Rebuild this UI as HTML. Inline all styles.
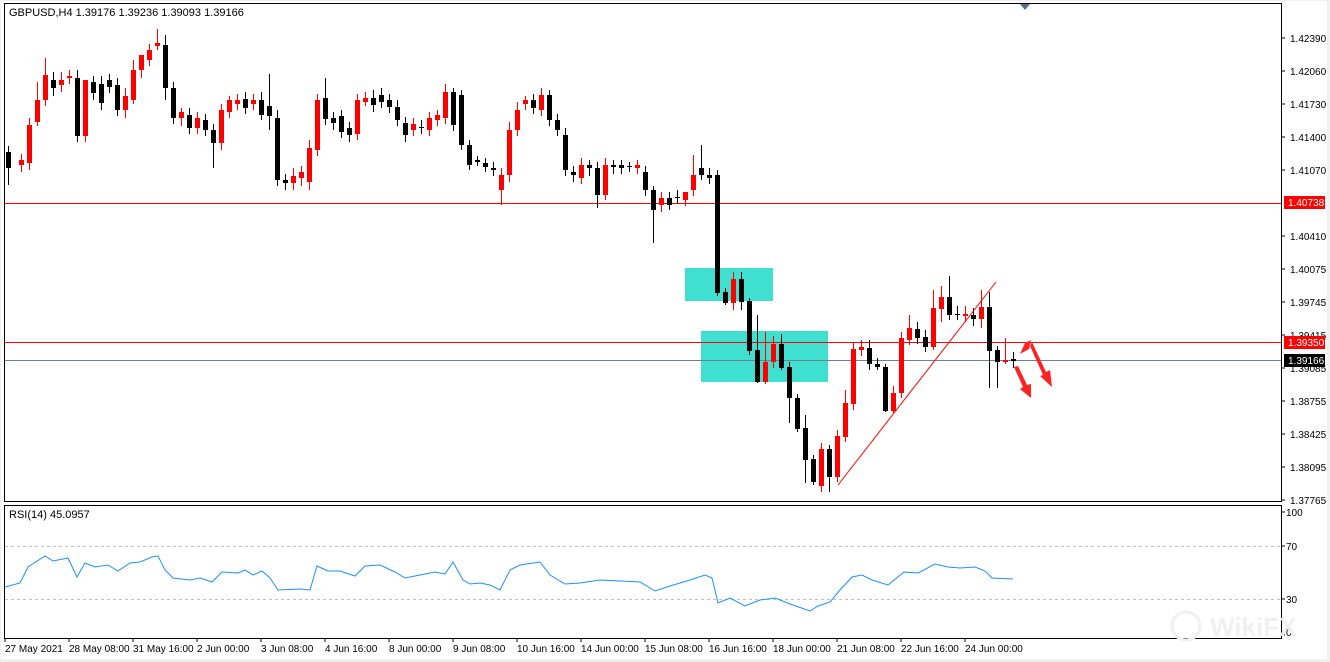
<!DOCTYPE html>
<html><head><meta charset="utf-8"><style>
html,body{margin:0;padding:0;background:#f0f0f0;}
svg{display:block;font-family:"Liberation Sans",sans-serif;}
.r rect{fill:#f00}.r path{stroke:#f00;fill:none}
.b rect{fill:#000}.b path{stroke:#000;fill:none}
</style></head><body>
<svg width="1330" height="662" viewBox="0 0 1330 662" xmlns="http://www.w3.org/2000/svg">
<rect x="0" y="0" width="1330" height="662" fill="#f0f0f0"/>
<rect x="1" y="1" width="1326" height="658" fill="#fff"/>
<rect x="4.5" y="3.5" width="1277" height="498" fill="#fff" stroke="#000"/>
<rect x="4.5" y="505.5" width="1277" height="133" fill="#fff" stroke="#000"/>
<polygon points="1020,4 1030,4 1025,10" fill="#607080"/>
<text x="9" y="16" font-size="11" fill="#000">GBPUSD,H4  1.39176 1.39236 1.39093 1.39166</text>
<text x="9" y="518" font-size="11" fill="#000">RSI(14) 45.0957</text>
<rect x="685" y="268" width="88" height="33" fill="#40e0d0"/>
<rect x="701" y="331" width="127" height="51" fill="#40e0d0"/>
<line x1="5" y1="203.5" x2="1281" y2="203.5" stroke="#f00"/>
<line x1="5" y1="342.5" x2="1281" y2="342.5" stroke="#f00"/>
<line x1="5" y1="360.5" x2="1281" y2="360.5" stroke="#708090"/>

<g class="b">
<path d="M8.5,146V185M53.5,72V96M77.5,70V142M93.5,76V100M101.5,76V110M109.5,74V93M117.5,78V116M165.5,35V100M173.5,82V124M189.5,108V134M205.5,114V136M213.5,124V168M245.5,92V114M261.5,92V120M269.5,74V130M277.5,110V186M285.5,174V190M325.5,78V125M333.5,112V130M341.5,110V138M349.5,122V142M373.5,90V112M381.5,88V108M389.5,94V113M397.5,100V126M405.5,117V142M421.5,120V134M453.5,88V131M461.5,90V150M469.5,140V170M477.5,156V166M485.5,158V172M493.5,162V176M533.5,94V114M549.5,90V126M557.5,114V136M565.5,128V176M573.5,166V182M589.5,160V176M597.5,162V208M613.5,160V174M621.5,160V174M629.5,162V172M645.5,166V196M653.5,186V243M669.5,192V210M677.5,190V204M701.5,145V180M709.5,168V184M717.5,170V296M725.5,288V305M741.5,272V310M749.5,298V355M757.5,315V383M781.5,334V370M789.5,362V423M797.5,394V432M805.5,415V483M813.5,455V485M829.5,445V492M869.5,340V370M877.5,358V370M885.5,364V412M917.5,322V344M925.5,330V352M949.5,276V320M957.5,306V320M973.5,308V326M989.5,292V388M997.5,346V388M1013.5,352V368"/>
<rect x="6" y="152" width="5" height="16"/><rect x="51" y="80" width="5" height="8"/><rect x="75" y="78" width="5" height="58"/><rect x="91" y="82" width="5" height="11"/><rect x="99" y="84" width="5" height="19"/><rect x="107" y="80" width="5" height="7"/><rect x="115" y="85" width="5" height="25"/><rect x="163" y="45" width="5" height="43"/><rect x="171" y="88" width="5" height="30"/><rect x="187" y="115" width="5" height="13"/><rect x="203" y="120" width="5" height="10"/><rect x="211" y="130" width="5" height="13"/><rect x="243" y="99" width="5" height="9"/><rect x="259" y="100" width="5" height="15"/><rect x="267" y="106" width="5" height="10"/><rect x="275" y="118" width="5" height="62"/><rect x="283" y="180" width="5" height="3"/><rect x="323" y="98" width="5" height="21"/><rect x="331" y="118" width="5" height="5"/><rect x="339" y="116" width="5" height="16"/><rect x="347" y="128" width="5" height="7"/><rect x="371" y="98" width="5" height="7"/><rect x="379" y="95" width="5" height="7"/><rect x="387" y="100" width="5" height="7"/><rect x="395" y="107" width="5" height="13"/><rect x="403" y="123" width="5" height="12"/><rect x="419" y="127" width="5" height="1"/><rect x="451" y="92" width="5" height="33"/><rect x="459" y="95" width="5" height="50"/><rect x="467" y="145" width="5" height="20"/><rect x="475" y="160" width="5" height="2"/><rect x="483" y="163" width="5" height="4"/><rect x="491" y="168" width="5" height="2"/><rect x="531" y="100" width="5" height="8"/><rect x="547" y="95" width="5" height="25"/><rect x="555" y="120" width="5" height="10"/><rect x="563" y="135" width="5" height="35"/><rect x="571" y="172" width="5" height="3"/><rect x="587" y="165" width="5" height="3"/><rect x="595" y="168" width="5" height="27"/><rect x="611" y="165" width="5" height="2"/><rect x="619" y="165" width="5" height="3"/><rect x="627" y="166" width="5" height="1"/><rect x="643" y="172" width="5" height="18"/><rect x="651" y="190" width="5" height="20"/><rect x="667" y="198" width="5" height="7"/><rect x="675" y="197" width="5" height="1"/><rect x="699" y="168" width="5" height="7"/><rect x="707" y="175" width="5" height="3"/><rect x="715" y="175" width="5" height="118"/><rect x="723" y="292" width="5" height="11"/><rect x="739" y="279" width="5" height="23"/><rect x="747" y="301" width="5" height="50"/><rect x="755" y="350" width="5" height="32"/><rect x="779" y="344" width="5" height="24"/><rect x="787" y="367" width="5" height="31"/><rect x="795" y="398" width="5" height="31"/><rect x="803" y="428" width="5" height="32"/><rect x="811" y="459" width="5" height="23"/><rect x="827" y="449" width="5" height="28"/><rect x="867" y="348" width="5" height="16"/><rect x="875" y="364" width="5" height="3"/><rect x="883" y="367" width="5" height="44"/><rect x="915" y="329" width="5" height="9"/><rect x="923" y="337" width="5" height="10"/><rect x="947" y="297" width="5" height="18"/><rect x="955" y="314" width="5" height="1"/><rect x="971" y="315" width="5" height="4"/><rect x="987" y="307" width="5" height="44"/><rect x="995" y="350" width="5" height="12"/><rect x="1011" y="359" width="5" height="2"/>
</g>
<g class="r">
<path d="M21.5,154V172M29.5,118V170M37.5,82V126M45.5,58V106M61.5,72V92M69.5,70V84M85.5,94V142M125.5,88V118M133.5,60V104M141.5,60V78M149.5,44V66M157.5,29V50M181.5,108V126M197.5,112V134M221.5,104V150M229.5,96V118M237.5,94V110M253.5,94V110M293.5,168V190M301.5,166V186M309.5,140V190M317.5,94V156M357.5,94V140M365.5,92V106M413.5,118V136M429.5,112V136M437.5,110V126M445.5,84V124M501.5,168V205M509.5,122V182M517.5,102V136M525.5,96V110M541.5,88V116M581.5,158V184M605.5,158V200M637.5,160V174M661.5,192V212M685.5,192V206M693.5,155V196M733.5,272V310M765.5,332V384M773.5,336V368M821.5,443V492M837.5,430V482M845.5,390V442M853.5,342V410M861.5,340V356M893.5,386V414M901.5,332V398M909.5,315V345M933.5,290V350M941.5,286V322M965.5,306V322M981.5,290V328M1005.5,338V364"/>
<rect x="19" y="160" width="5" height="5"/><rect x="27" y="125" width="5" height="38"/><rect x="35" y="100" width="5" height="22"/><rect x="43" y="75" width="5" height="25"/><rect x="59" y="80" width="5" height="5"/><rect x="67" y="76" width="5" height="2"/><rect x="83" y="80" width="5" height="56"/><rect x="123" y="96" width="5" height="14"/><rect x="131" y="70" width="5" height="30"/><rect x="139" y="55" width="5" height="15"/><rect x="147" y="50" width="5" height="10"/><rect x="155" y="43" width="5" height="3"/><rect x="179" y="112" width="5" height="6"/><rect x="195" y="118" width="5" height="10"/><rect x="219" y="110" width="5" height="33"/><rect x="227" y="100" width="5" height="12"/><rect x="235" y="100" width="5" height="4"/><rect x="251" y="100" width="5" height="4"/><rect x="291" y="176" width="5" height="7"/><rect x="299" y="172" width="5" height="6"/><rect x="307" y="148" width="5" height="34"/><rect x="315" y="100" width="5" height="50"/><rect x="355" y="100" width="5" height="34"/><rect x="363" y="98" width="5" height="4"/><rect x="411" y="124" width="5" height="6"/><rect x="427" y="118" width="5" height="12"/><rect x="435" y="115" width="5" height="5"/><rect x="443" y="92" width="5" height="26"/><rect x="499" y="175" width="5" height="15"/><rect x="507" y="130" width="5" height="45"/><rect x="515" y="110" width="5" height="20"/><rect x="523" y="100" width="5" height="4"/><rect x="539" y="95" width="5" height="15"/><rect x="579" y="165" width="5" height="13"/><rect x="603" y="165" width="5" height="30"/><rect x="635" y="165" width="5" height="3"/><rect x="659" y="198" width="5" height="7"/><rect x="683" y="192" width="5" height="8"/><rect x="691" y="175" width="5" height="15"/><rect x="731" y="279" width="5" height="24"/><rect x="763" y="362" width="5" height="20"/><rect x="771" y="344" width="5" height="18"/><rect x="819" y="449" width="5" height="37"/><rect x="835" y="436" width="5" height="41"/><rect x="843" y="403" width="5" height="34"/><rect x="851" y="349" width="5" height="55"/><rect x="859" y="347" width="5" height="3"/><rect x="891" y="393" width="5" height="18"/><rect x="899" y="338" width="5" height="55"/><rect x="907" y="328" width="5" height="12"/><rect x="931" y="308" width="5" height="39"/><rect x="939" y="297" width="5" height="12"/><rect x="963" y="314" width="5" height="2"/><rect x="979" y="307" width="5" height="12"/><rect x="1003" y="360" width="5" height="2"/>
</g>

<line x1="838" y1="485" x2="996" y2="282" stroke="#f00"/>
<g fill="#f22">
<polygon points="1020,354 1025,343 1031,340 1029,349"/>
<polygon points="1032,342 1046,372 1050,370 1052,387 1040,376 1043,375 1030,346"/>
<polygon points="1014,367 1023,387 1020,389 1031,398 1031,384 1027,385 1018,366"/>
</g>

<line x1="5" y1="546.5" x2="1281" y2="546.5" stroke="#c0c0c0" stroke-dasharray="3,3"/>
<line x1="5" y1="599.5" x2="1281" y2="599.5" stroke="#c0c0c0" stroke-dasharray="3,3"/>
<polyline fill="none" stroke="#1e90ff" points="5,587 20,583 28,567 45,556 53,561 68,558 77,577 85,563 95,567 108,565 118,571 130,563 140,562 152,557 158,556 165,570 173,578 190,580 200,578 212,582 222,572 238,573 245,570 253,575 262,571 270,578 278,590 300,589 310,590 317,566 328,571 340,571 355,576 365,566 380,565 395,572 405,578 420,575 435,572 445,574 453,562 463,580 470,584 480,583 490,585 500,590 510,570 520,565 540,562 550,575 565,584 580,583 600,580 620,581 640,582 655,591 670,586 690,580 705,575 712,578 718,603 730,598 745,606 760,600 775,598 790,604 810,611 818,606 830,602 840,590 852,577 862,575 872,580 888,585 904,572 918,573 935,564 948,567 960,568 975,567 985,571 992,578 1013,579"/>

<g font-size="10" fill="#000">
<text x="1290" y="42">1.42390</text><text x="1290" y="75">1.42060</text><text x="1290" y="108">1.41730</text><text x="1290" y="141">1.41400</text><text x="1290" y="174">1.41070</text><text x="1290" y="240">1.40410</text><text x="1290" y="273">1.40075</text><text x="1290" y="306">1.39745</text><text x="1290" y="339">1.39415</text><text x="1290" y="372">1.39085</text><text x="1290" y="405">1.38755</text><text x="1290" y="438">1.38425</text><text x="1290" y="471">1.38095</text><text x="1290" y="504">1.37765</text>
<text x="1286" y="516">100</text><text x="1286" y="550">70</text><text x="1286" y="603">30</text><text x="1286" y="636">0</text>
</g>
<path stroke="#000" d="M1282,38h3M1282,71h3M1282,104h3M1282,137h3M1282,170h3M1282,236h3M1282,269h3M1282,302h3M1282,335h3M1282,368h3M1282,401h3M1282,434h3M1282,467h3M1282,500h3M1282,512h3M1282,546h3M1282,599h3M1282,635h3"/>
<rect x="1284" y="196" width="41" height="13" fill="#f00"/><text x="1288" y="206" font-size="10" fill="#fff">1.40738</text>
<rect x="1284" y="336" width="41" height="13" fill="#f00"/><text x="1288" y="346" font-size="10" fill="#fff">1.39350</text>
<rect x="1284" y="354" width="41" height="13" fill="#000"/><text x="1288" y="364" font-size="10" fill="#fff">1.39166</text>

<g font-size="10" fill="#000">
<text x="5" y="652">27 May 2021</text><text x="69" y="652">28 May 08:00</text><text x="133" y="652">31 May 16:00</text><text x="197" y="652">2 Jun 00:00</text><text x="261" y="652">3 Jun 08:00</text><text x="325" y="652">4 Jun 16:00</text><text x="389" y="652">8 Jun 00:00</text><text x="453" y="652">9 Jun 08:00</text><text x="517" y="652">10 Jun 16:00</text><text x="581" y="652">14 Jun 00:00</text><text x="645" y="652">15 Jun 08:00</text><text x="709" y="652">16 Jun 16:00</text><text x="773" y="652">18 Jun 00:00</text><text x="837" y="652">21 Jun 08:00</text><text x="901" y="652">22 Jun 16:00</text><text x="965" y="652">24 Jun 00:00</text>
</g>
<path stroke="#000" d="M5,639v3M69,639v3M133,639v3M197,639v3M261,639v3M325,639v3M389,639v3M453,639v3M517,639v3M581,639v3M645,639v3M709,639v3M773,639v3M837,639v3M901,639v3M965,639v3"/>
<text x="1210" y="636" font-size="26" font-weight="bold" fill="#f0f0f0">WikiFX</text>
<circle cx="1186" cy="626" r="14" fill="none" stroke="#f0f0f0" stroke-width="3"/>
</svg>
</body></html>
